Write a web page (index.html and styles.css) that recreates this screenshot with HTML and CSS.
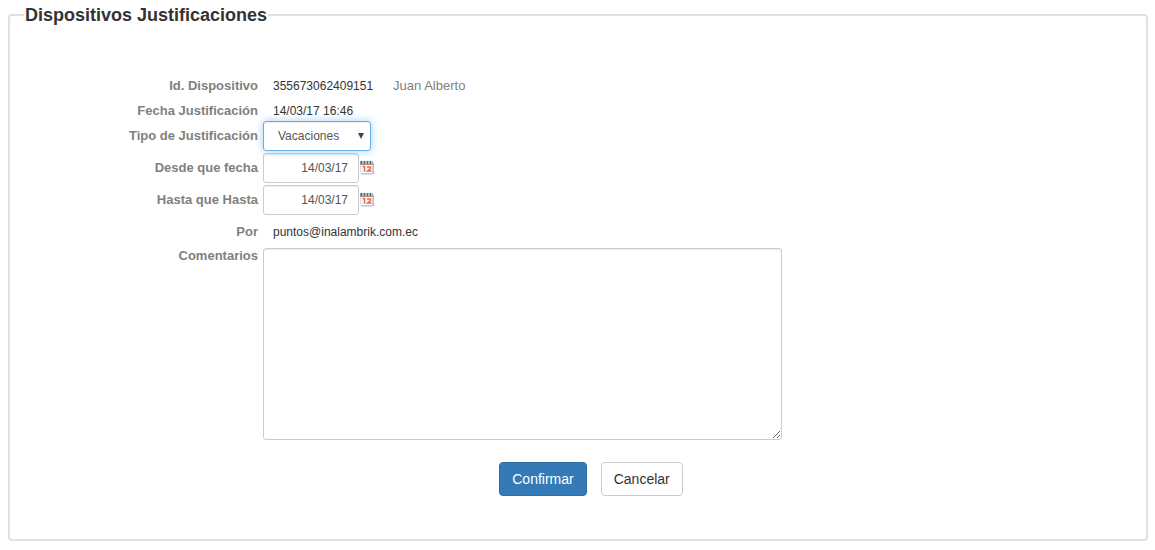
FILE: index.html
```html
<!DOCTYPE html>
<html lang="es">
<head>
<meta charset="utf-8">
<meta name="viewport" content="width=device-width, initial-scale=1">
<title>Dispositivos Justificaciones</title>
<link rel="stylesheet" href="styles.css">
</head>
<body>
<svg class="sprite" aria-hidden="true">
  <symbol id="calendar" viewBox="0 0 16 16">
    <path d="M1.500 2.500h12v11h-11.500z" fill="#fafaff" stroke="#d6d8ea"/>
    <path d="M14.500 3v11h-12" fill="none" stroke="#b4b6d8"/>
    <path d="M1 1h13v4h-13z" fill="#9a9aa6"/>
    <path d="M2.500 1v3M5.500 1v3M8.500 1v3M11.500 1v3" stroke="#5c5c68"/>
    <path d="M4 1v3M7 1v3M10 1v3M13 1v3" stroke="#d4d4de"/>
    <path d="M3.500 6.500h2v5M8 7h3.500v1.500l-3 2.500h4" fill="none" stroke="#f4692c" stroke-width="1.500"/>
  </symbol>
</svg>
<form>
  <fieldset class="panel">
    <legend class="panel-title">Dispositivos Justificaciones</legend>
    <div class="fields">
      <span class="label">Id. Dispositivo</span>
      <div class="value"><span>355673062409151</span><span class="name">Juan Alberto</span></div>

      <span class="label">Fecha Justificación</span>
      <div class="value">14/03/17 16:46</div>

      <label class="label label-control" for="tipo">Tipo de Justificación</label>
      <div class="control">
        <span class="select-wrap">
          <select id="tipo" class="input select"><option>Vacaciones</option></select>
          <svg class="arrow" viewBox="0 0 6 6" aria-hidden="true"><path d="M0 0h6L3 6z" fill="#444"/></svg>
        </span>
      </div>

      <label class="label label-control" for="desde">Desde que fecha</label>
      <div class="control">
        <input id="desde" class="input date" type="text" value="14/03/17">
        <button class="picker" type="button" aria-label="Elegir desde que fecha"><svg class="icon"><use href="#calendar"/></svg></button>
      </div>

      <label class="label label-control" for="hasta">Hasta que Hasta</label>
      <div class="control">
        <input id="hasta" class="input date" type="text" value="14/03/17">
        <button class="picker" type="button" aria-label="Elegir hasta que fecha"><svg class="icon"><use href="#calendar"/></svg></button>
      </div>

      <span class="label label-control">Por</span>
      <div class="value value-control">puntos@inalambrik.com.ec</div>

      <label class="label label-top" for="comentarios">Comentarios</label>
      <textarea id="comentarios" class="input comments"></textarea>
    </div>
    <div class="actions">
      <button class="btn btn-primary" type="submit">Confirmar</button>
      <button class="btn" type="button">Cancelar</button>
    </div>
  </fieldset>
</form>
</body>
</html>
```
FILE: styles.css
```css
* { box-sizing: border-box; }
body {
  margin: 0;
  padding: 4px 7px 8px 8px;
  background: #fff;
  color: #333;
  font-family: "Liberation Sans", Arial, sans-serif;
  font-size: 13px;
  line-height: 20px;
}
.sprite { position: absolute; width: 0; height: 0; }
.panel {
  margin: 0;
  padding: 50px 14px 43px;
  border: 2px solid #e0e0e0;
  border-radius: 4px;
}
.panel-title {
  padding: 0 1px;
  font-size: 18px;
  font-weight: bold;
  line-height: 22px;
}
.fields {
  display: grid;
  grid-template-columns: 234px minmax(0, 519px);
  grid-template-rows: 25px 20px 32px 32px 32px 31px auto;
  column-gap: 5px;
  align-items: start;
}
.label {
  text-align: right;
  color: #808080;
  font-weight: bold;
}
.value {
  display: flex;
  gap: 20px;
  padding-left: 10px;
  font-size: 12px;
}
.label-control,
.value-control { padding-top: 5px; }
.label-top { line-height: 16px; }
.name {
  color: #808080;
  font-size: 13px;
}
.control { display: flex; align-items: center; }
.select-wrap { position: relative; display: flex; }
.input {
  height: 30px;
  border: 1px solid #ccc;
  border-radius: 3px;
  background: #fff;
  color: #555;
  font-family: "Liberation Sans", Arial, sans-serif;
  font-size: 12px;
  outline: 0;
  box-shadow: inset 0 1px 1px rgba(0, 0, 0, 0.075);
}
.select {
  width: 108px;
  padding: 0 14px;
  appearance: none;
  border-color: #66afe9;
  box-shadow: inset 0 1px 1px rgba(0, 0, 0, 0.075), 0 0 8px rgba(102, 175, 233, 0.6);
}
.arrow {
  position: absolute;
  top: 12px;
  right: 7px;
  width: 6px;
  height: 6px;
  pointer-events: none;
}
.date { width: 96px; padding: 0 10px; text-align: right; }
.picker {
  display: flex;
  padding: 0;
  border: 0;
  background: none;
  cursor: pointer;
}
.icon { width: 16px; height: 16px; }
.comments {
  display: block;
  width: 100%;
  height: 192px;
  padding: 5px 10px;
}
.actions {
  display: flex;
  justify-content: center;
  gap: 14px;
  padding: 22px 0 0 26px;
}
.btn {
  padding: 6px 12px;
  border: 1px solid #ccc;
  border-radius: 4px;
  background: #fff;
  color: #333;
  font-family: "Liberation Sans", Arial, sans-serif;
  font-size: 14px;
  line-height: 20px;
  cursor: pointer;
}
.btn-primary {
  border-color: #2e6da4;
  background: #337ab7;
  color: #fff;
}
```
